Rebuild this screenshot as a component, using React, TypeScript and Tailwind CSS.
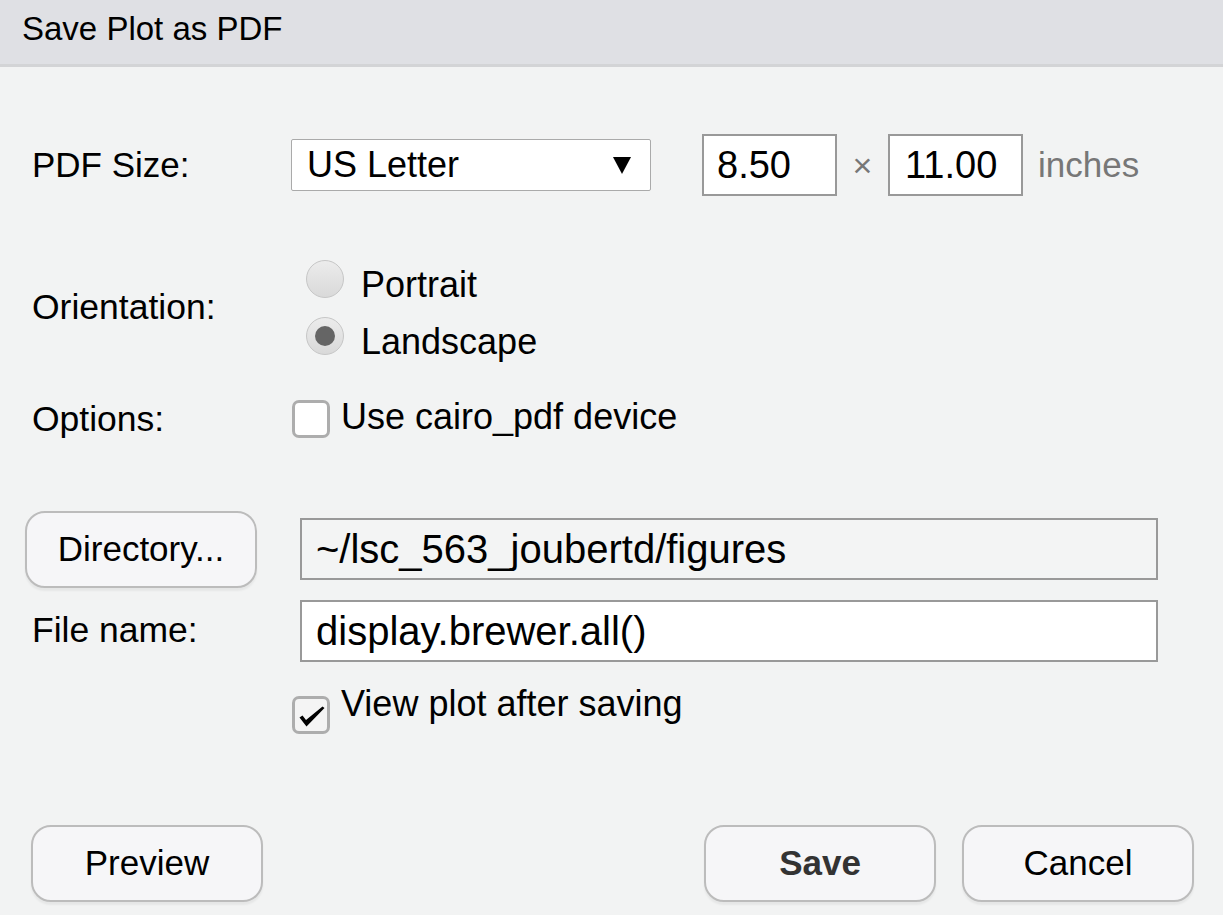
const font = { fontFamily: '"Liberation Sans", Arial, sans-serif' };

function Radio({ checked }: { checked?: boolean }) {
  return (
    <span className="w-[38px] h-[38px] rounded-full border border-[#c6c6c6] bg-gradient-to-b from-[#ececec] to-[#d9d9d9] flex items-center justify-center shrink-0">
      {checked && <span className="w-[20px] h-[20px] rounded-full bg-[#656565]" />}
    </span>
  );
}

function Checkbox({ checked }: { checked?: boolean }) {
  return (
    <span
      className={`w-[38px] h-[38px] rounded-[7px] border-[3px] border-[#adadad] flex items-center justify-center shrink-0 ${
        checked ? 'bg-[#f4f4f4]' : 'bg-white'
      }`}
    >
      {checked && (
        <svg width="26" height="21" viewBox="0 0 26 21" className="mt-[3px] ml-[2px]">
          <path d="M0.5 11.5 L3.5 9.5 L7 14 L23.5 0.5 L25.5 2 L7.5 20.5 Z" fill="#000" />
        </svg>
      )}
    </span>
  );
}

function Button({ label, bold }: { label: string; bold?: boolean }) {
  return (
    <button
      className={`w-[232px] h-[77px] rounded-[20px] border-2 border-[#bcbcbc] bg-[#f6f6f8] shadow-[0_3px_2px_rgba(0,0,0,0.05)] text-[35px] ${
        bold ? 'font-bold text-[#333]' : 'text-black'
      }`}
    >
      {label}
    </button>
  );
}

export default function App() {
  return (
    <div className="w-full min-h-screen bg-[#f2f3f3] text-black" style={font}>
      <div className="h-[67px] bg-[#dfe0e4] border-b-[3px] border-[#d3d4d6] flex items-center pl-[22px] pb-[6px]">
        <span className="text-[33px]">Save Plot as PDF</span>
      </div>

      {/* PDF size */}
      <div className="flex items-center pl-[32px] mt-[67px] h-[62px]">
        <span className="w-[259px] text-[35px]">PDF Size:</span>
        <div className="w-[360px] h-[52px] bg-white border border-[#aaaaaa] rounded-[2px] flex items-center justify-between pl-[15px] pr-[19px]">
          <span className="text-[36px]">US Letter</span>
          <svg width="18" height="17" viewBox="0 0 18 17">
            <polygon points="0,0 18,0 9,17" fill="#000" />
          </svg>
        </div>
        <div className="ml-[51px] w-[135px] h-[62px] bg-white border-2 border-[#999] flex items-center pl-[13px] text-[38px]">
          8.50
        </div>
        <span className="w-[51px] text-center text-[34px] leading-none text-[#777]">×</span>
        <div className="w-[135px] h-[62px] bg-white border-2 border-[#999] flex items-center pl-[15px] text-[38px]">
          11.00
        </div>
        <span className="ml-[15px] text-[35px] text-[#777]">inches</span>
      </div>

      {/* Orientation */}
      <div className="flex items-center pl-[32px] mt-[64px]">
        <span className="w-[274px] text-[35.5px]">Orientation:</span>
        <div className="flex flex-col">
          <div className="flex items-start h-[57px]">
            <Radio />
            <span className="ml-[17px] mt-[5px] text-[36px] leading-[40px]">Portrait</span>
          </div>
          <div className="flex items-start h-[38px]">
            <Radio checked />
            <span className="ml-[17px] mt-[5px] text-[36px] leading-[40px]">Landscape</span>
          </div>
        </div>
      </div>

      {/* Options */}
      <div className="flex items-center pl-[32px] mt-[45px] h-[38px]">
        <span className="w-[260px] text-[35.5px] mt-[2px]">Options:</span>
        <Checkbox />
        <span className="ml-[11px] text-[36px] -mt-[4px]">Use cairo_pdf device</span>
      </div>

      {/* Directory */}
      <div className="flex items-center pl-[25px] pr-[65px] mt-[73px] h-[76px]">
        <Button label="Directory..." />
        <div className="ml-[43px] flex-1 h-[62px] bg-[#f3f4f4] border-2 border-[#999] flex items-center pl-[14px] text-[40px]">
          ~/lsc_563_joubertd/figures
        </div>
      </div>

      {/* File name */}
      <div className="flex items-center pl-[32px] pr-[65px] mt-[13px] h-[62px]">
        <span className="w-[268px] text-[35.5px]">File name:</span>
        <div className="flex-1 h-[62px] bg-white border-2 border-[#999] flex items-center pl-[14px] text-[40px]">
          display.brewer.all()
        </div>
      </div>

      {/* View after saving */}
      <div className="flex items-start pl-[292px] mt-[22px]">
        <span className="mt-[12px]">
          <Checkbox checked />
        </span>
        <span className="ml-[11px] text-[36px] leading-[40px]">View plot after saving</span>
      </div>

      {/* Footer */}
      <div className="flex items-center pl-[31px] pr-[29px] mt-[91px]">
        <Button label="Preview" />
        <div className="flex-1" />
        <Button label="Save" bold />
        <div className="w-[26px]" />
        <Button label="Cancel" />
      </div>
    </div>
  );
}
